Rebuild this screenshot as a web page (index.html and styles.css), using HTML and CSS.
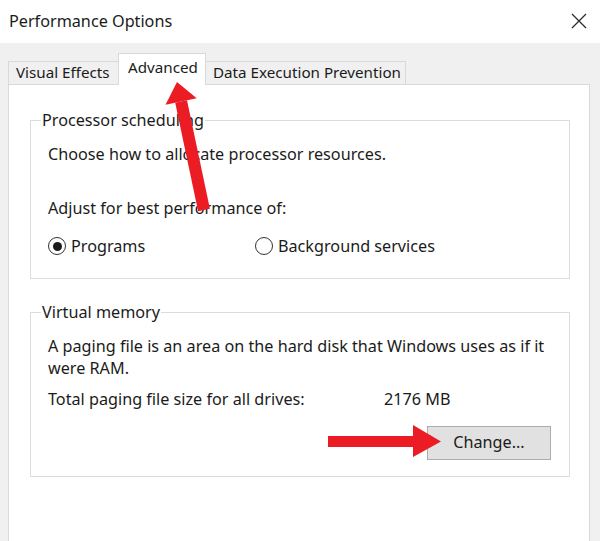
FILE: index.html
```html
<!DOCTYPE html>
<html>
<head>
<meta charset="utf-8">
<link rel="stylesheet" href="styles.css">
</head>
<body>
<div class="titlebar">
  <span class="title">Performance Options</span>
  <svg class="close" width="16" height="16" viewBox="0 0 16 16"><path d="M1 1 L15 15 M15 1 L1 15" stroke="#2b2b2b" stroke-width="1.3" fill="none"/></svg>
</div>
<div class="tabs">
  <div class="tab tab-ve">Visual Effects</div>
  <div class="tab tab-adv selected">Advanced</div>
  <div class="tab tab-dep">Data Execution Prevention</div>
</div>
<div class="panel">
  <fieldset class="group group-proc">
    <legend>Processor scheduling</legend>
    <div class="line">Choose how to allocate processor resources.</div>
    <div class="line line-adjust">Adjust for best performance of:</div>
    <div class="radios">
      <div class="radio radio-first"><span class="circle checked"></span><span>Programs</span></div>
      <div class="radio"><span class="circle"></span><span>Background services</span></div>
    </div>
  </fieldset>
  <fieldset class="group group-vm">
    <legend>Virtual memory</legend>
    <div class="line">A paging file is an area on the hard disk that Windows uses as if it<br>were RAM.</div>
    <div class="total"><span class="total-label">Total paging file size for all drives:</span><span>2176 MB</span></div>
    <div class="btnrow"><div class="button">Change...</div></div>
  </fieldset>
</div>
<svg class="arrows" width="600" height="541" viewBox="0 0 600 541">
  <polygon points="175.2,102.7 187.0,100.3 209.9,208.8 198.1,211.2" fill="#ec1c24"/>
  <polygon points="177,82 196.7,98.2 165.5,104.8" fill="#ec1c24"/>
  <rect x="328" y="436" width="87" height="11" fill="#ec1c24"/>
  <polygon points="413,425 441,441.5 413,457" fill="#ec1c24"/>
</svg>
</body>
</html>
```
FILE: styles.css
```css
html, body {
  margin: 0;
  padding: 0;
}
body {
  width: 600px;
  height: 541px;
  overflow: hidden;
  position: relative;
  background: #f0f0f0;
  font-family: "Noto Sans", "Open Sans", sans-serif;
  font-size: 16.2px;
  color: #1b1b1b;
}
.titlebar {
  height: 43px;
  background: #ffffff;
  display: flex;
  align-items: center;
  justify-content: space-between;
  padding: 0 13px 0 9px;
  box-sizing: border-box;
}
.title {
  font-size: 16.2px;
  color: #1b1b1b;
  margin-top: -2px;
}
.close {
  display: block;
  margin-top: -2px;
}
.tabs {
  display: flex;
  align-items: flex-end;
  padding-left: 8px;
  margin-top: 10px;
  height: 31px;
  position: relative;
  z-index: 1;
}
.tab {
  box-sizing: border-box;
  height: 23px;
  border: 1px solid #d9d9d9;
  border-bottom: none;
  background: #f0f0f0;
  font-size: 15.2px;
  line-height: 21px;
  padding-left: 7px;
  white-space: nowrap;
}
.tab-ve { width: 110px; border-right: none; }
.tab-adv { width: 88px; }
.tab-dep { width: 200px; border-left: none; padding-left: 7px; }
.tab.selected {
  height: 32px;
  margin-bottom: -1px;
  background: #ffffff;
  line-height: 26px;
  padding-left: 9px;
  align-self: flex-end;
}
.panel {
  margin-left: 8px;
  width: 582px;
  height: 470px;
  box-sizing: border-box;
  background: #ffffff;
  border: 1px solid #d9d9d9;
  padding: 24px 19px 0 21px;
}
.group {
  margin: 0;
  border: 1px solid #dcdcdc;
  padding: 0 18px 0 17px;
  min-inline-size: 0;
}
.group legend {
  padding: 0 1px;
  margin-left: -7px;
  line-height: 22px;
}
.line {
  line-height: 22px;
}
.group-proc {
  padding-top: 12px;
  padding-bottom: 21px;
}
.line-adjust {
  margin-top: 32px;
}
.radios {
  display: flex;
  margin-top: 16px;
  line-height: 22px;
}
.radio {
  display: flex;
  align-items: center;
}
.radio-first {
  width: 207px;
}
.circle {
  box-sizing: border-box;
  width: 18px;
  height: 18px;
  border: 1.5px solid #333333;
  border-radius: 50%;
  margin-right: 5px;
  display: flex;
  align-items: center;
  justify-content: center;
}
.circle.checked::after {
  content: "";
  width: 9px;
  height: 9px;
  border-radius: 50%;
  background: #1b1b1b;
}
.group-vm {
  margin-top: 22px;
  padding-top: 12px;
  padding-bottom: 16px;
}
.total {
  display: flex;
  margin-top: 9px;
  line-height: 22px;
}
.total-label {
  width: 336px;
}
.btnrow {
  display: flex;
  justify-content: flex-end;
  margin-top: 16px;
}
.button {
  box-sizing: border-box;
  width: 124px;
  height: 34px;
  background: #e1e1e1;
  border: 1px solid #adadad;
  text-align: center;
  line-height: 31px;
}
.arrows {
  position: absolute;
  left: 0;
  top: 0;
  pointer-events: none;
  z-index: 2;
}
```
